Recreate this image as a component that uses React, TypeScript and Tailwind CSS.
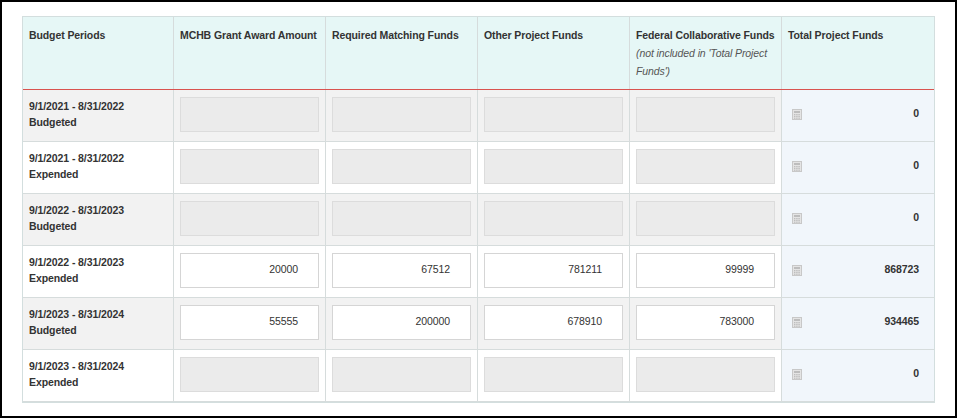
import React from "react";

const rows = [
  { p: "9/1/2021 - 8/31/2022", t: "Budgeted", v: null, total: "0" },
  { p: "9/1/2021 - 8/31/2022", t: "Expended", v: null, total: "0" },
  { p: "9/1/2022 - 8/31/2023", t: "Budgeted", v: null, total: "0" },
  { p: "9/1/2022 - 8/31/2023", t: "Expended", v: ["20000", "67512", "781211", "99999"], total: "868723" },
  { p: "9/1/2023 - 8/31/2024", t: "Budgeted", v: ["55555", "200000", "678910", "783000"], total: "934465" },
  { p: "9/1/2023 - 8/31/2024", t: "Expended", v: null, total: "0" },
];

function Calc() {
  return (
    <svg width="10" height="11" viewBox="0 0 10 11">
      <rect x="0.5" y="0.5" width="9" height="10" fill="#e4e4e4" stroke="#c8c8c8" />
      <rect x="2" y="2" width="6" height="2" fill="#bdbdbd" />
      {[0, 1, 2].map((r) =>
        [0, 1, 2].map((c) => (
          <rect key={r + "-" + c} x={2 + c * 2.2} y={5 + r * 1.8} width="1.4" height="1.2" fill="#bdbdbd" />
        ))
      )}
    </svg>
  );
}

export default function App() {
  const cell = "border-r border-[#d6dcdc] px-[6px]";
  return (
    <div className="w-[957px] h-[418px] bg-white border-2 border-black box-border pt-[14px] pl-[20px]" style={{ fontFamily: "'Liberation Sans', Arial, sans-serif" }}>
      <div className="w-[913px] border border-[#d3dede] text-[10.5px] tracking-[-0.1px] text-[#333] font-bold">
        <div className="grid grid-cols-[151px_152px_152px_152px_152px_1fr] h-[73px] bg-[#e6f7f6] border-b border-[#d9534f]">
          {["Budget Periods", "MCHB Grant Award Amount", "Required Matching Funds", "Other Project Funds"].map((h) => (
            <div key={h} className={cell + " pt-[11px] whitespace-nowrap"}>{h}</div>
          ))}
          <div className={cell + " pt-[9px] leading-[18px]"}>
            <div className="whitespace-nowrap">Federal Collaborative Funds</div>
            <div className="italic font-normal text-[#555] leading-[18px]">(not included in 'Total Project Funds')</div>
          </div>
          <div className="px-[6px] pt-[11px]">Total Project Funds</div>
        </div>
        {rows.map((r, i) => (
          <div key={i} className={"grid grid-cols-[151px_152px_152px_152px_152px_1fr] h-[52px] border-b border-[#d6dcdc] " + (i % 2 === 0 ? "bg-[#f2f2f2]" : "bg-white")}>
            <div className={cell + " flex flex-col justify-center leading-[16px] pb-[3px]"}>
              <div>{r.p}</div>
              <div>{r.t}</div>
            </div>
            {[0, 1, 2, 3].map((c) => (
              <div key={c} className={cell + " flex items-center pb-[3px]"}>
                {r.v ? (
                  <div className="w-full h-[35px] bg-white border border-[#d5d5d5] flex items-center justify-end pr-[20px] font-normal text-[#333]">{r.v[c]}</div>
                ) : (
                  <div className="w-full h-[35px] bg-[#ebebeb] border border-[#dcdcdc]" />
                )}
              </div>
            ))}
            <div className="bg-[#f1f6fb] flex items-center justify-between pl-[10px] pr-[15px] pb-[3px]">
              <Calc />
              <span>{r.total}</span>
            </div>
          </div>
        ))}
      </div>
    </div>
  );
}
